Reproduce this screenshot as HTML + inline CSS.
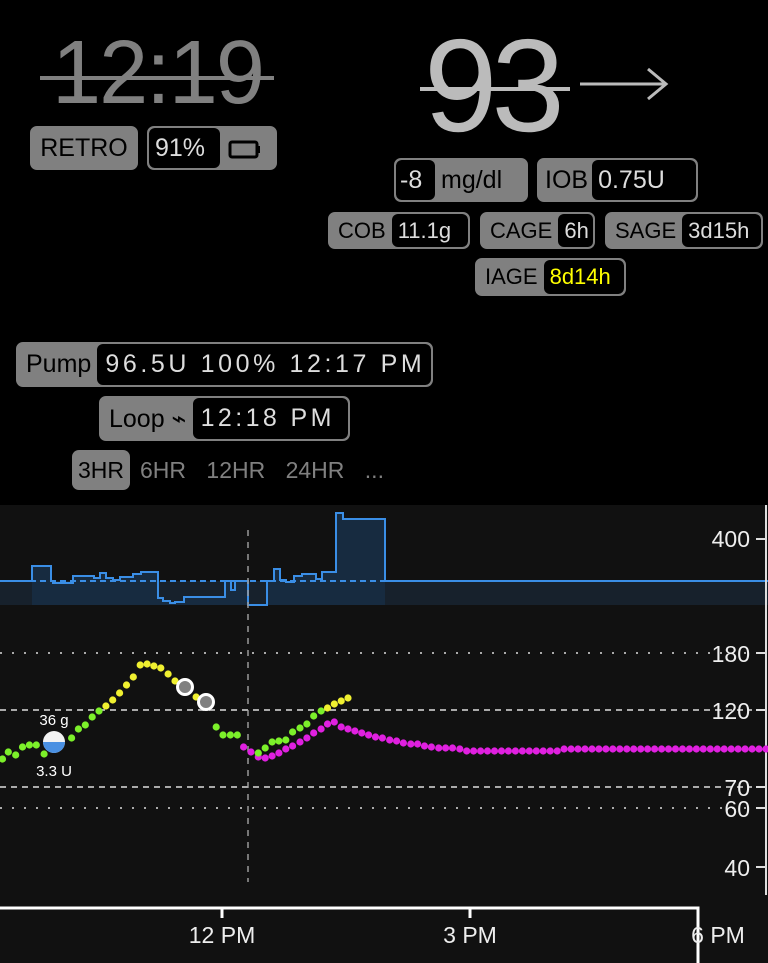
<!DOCTYPE html>
<html><head><meta charset="utf-8"><style>
*{margin:0;padding:0;box-sizing:border-box}
body{width:768px;height:963px;background:#000;position:relative;overflow:hidden;font-family:"Liberation Sans","DejaVu Sans",sans-serif}
.a{position:absolute}
.pill{position:absolute;background:#808080;border:2px solid #808080;border-radius:7px;color:#000;display:flex;align-items:center;white-space:nowrap;overflow:hidden}
.pill .l{padding:0 6px 0 8px}
.pill .v{background:#000;color:#ddd;height:100%;display:flex;align-items:center;padding:0 6px;border-radius:6px;flex:1}
</style></head><body>
<div class="a" style="left:52px;top:28px;font-size:90px;color:#808080;line-height:90px;transform:scaleX(0.98);transform-origin:0 0;letter-spacing:-2px">12:19</div>
<div class="a" style="left:40px;top:76px;width:234px;height:4px;background:#808080"></div>
<div class="a" style="left:424px;top:20px;font-size:132px;color:#bbb;letter-spacing:-6px;line-height:132px">93</div>
<div class="a" style="left:420px;top:87px;width:150px;height:4px;background:#bbb"></div>
<svg class="a" style="left:578px;top:66px" width="92" height="36"><path d="M2 18H86M70 3L88 18L70 33" stroke="#bbb" stroke-width="3" fill="none"/></svg>

<div class="pill" style="left:30px;top:126px;width:108px;height:44px;font-size:25px;justify-content:center">RETRO</div>
<div class="pill" style="left:147px;top:126px;width:130px;height:44px;font-size:25px"><div class="v" style="flex:0 0 71px">91%</div>
<svg width="50" height="30"><rect x="10" y="9" width="27" height="15" rx="2" stroke="#000" stroke-width="3" fill="none"/><rect x="37" y="13" width="3" height="7" fill="#000"/></svg></div>

<div class="pill" style="left:394px;top:158px;width:134px;height:44px;font-size:25px"><div class="v" style="flex:0 0 39px;padding:0 4px">-8</div><div class="l" style="padding-left:6px">mg/dl</div></div>
<div class="pill" style="left:537px;top:158px;width:161px;height:44px;font-size:25px"><div class="l" style="padding-left:6px;padding-right:4px">IOB</div><div class="v">0.75U</div></div>
<div class="pill" style="left:328px;top:212px;width:142px;height:37px;font-size:22px"><div class="l">COB</div><div class="v">11.1g</div></div>
<div class="pill" style="left:480px;top:212px;width:115px;height:37px;font-size:22px"><div class="l">CAGE</div><div class="v">6h</div></div>
<div class="pill" style="left:605px;top:212px;width:158px;height:37px;font-size:22px"><div class="l">SAGE</div><div class="v">3d15h</div></div>
<div class="pill" style="left:475px;top:258px;width:151px;height:38px;font-size:22px"><div class="l">IAGE</div><div class="v" style="color:#ff0">8d14h</div></div>

<div class="pill" style="left:16px;top:342px;width:417px;height:45px;font-size:25px"><div class="l">Pump</div><div class="v" style="letter-spacing:3.6px;padding-left:8px">96.5U 100% 12:17 PM</div></div>
<div class="pill" style="left:99px;top:396px;width:251px;height:45px;font-size:25px"><div class="l">Loop ⌁</div><div class="v" style="letter-spacing:3.4px;padding-left:8px">12:18 PM</div></div>
<div class="a" style="left:72px;top:450px;width:58px;height:40px;background:#808080;border-radius:7px;color:#000;font-size:23px;line-height:40px;text-align:center">3HR</div>
<div class="a" style="left:140px;top:450px;color:#808080;font-size:23px;line-height:40px;word-spacing:14px">6HR 12HR 24HR ...</div>

<div class="a" style="left:0;top:505px;width:768px;height:458px;background:#111"></div>
<svg class="a" style="left:0;top:0" width="768" height="963" font-family="Liberation Sans,sans-serif">
<rect x="0" y="581" width="768" height="24" fill="#17212c"/>
<path id="basf" fill="#172b40" stroke="none"/>
<path id="basl" fill="none" stroke="#3a8ee6" stroke-width="2"/>
<line x1="0" y1="581" x2="385" y2="581" stroke="#3a8ee6" stroke-width="2" stroke-dasharray="6,4"/>
<line x1="248" y1="530" x2="248" y2="882" stroke="#999" stroke-width="1.5" stroke-dasharray="6,6"/>
<line x1="0" y1="653" x2="752" y2="653" stroke="#aaa" stroke-width="2" stroke-dasharray="2,10"/>
<line x1="0" y1="710" x2="752" y2="710" stroke="#aaa" stroke-width="2" stroke-dasharray="6,5"/>
<line x1="0" y1="787" x2="752" y2="787" stroke="#aaa" stroke-width="2" stroke-dasharray="6,5"/>
<line x1="0" y1="808" x2="752" y2="808" stroke="#aaa" stroke-width="2" stroke-dasharray="2,10"/>
<line x1="766" y1="505" x2="766" y2="895" stroke="#ddd" stroke-width="2"/>
<g stroke="#ddd" stroke-width="2"><line x1="756" y1="539" x2="766" y2="539"/><line x1="756" y1="653" x2="766" y2="653"/><line x1="756" y1="710" x2="766" y2="710"/><line x1="756" y1="787" x2="766" y2="787"/><line x1="756" y1="808" x2="766" y2="808"/><line x1="756" y1="867" x2="766" y2="867"/></g>
<g fill="#eee" font-size="23" text-anchor="end"><text x="750" y="547">400</text><text x="750" y="662">180</text><text x="750" y="719">120</text><text x="750" y="796">70</text><text x="750" y="817">60</text><text x="750" y="876">40</text></g>
<path d="M0 908H698V963M222 908V918M470 908V918" stroke="#fff" stroke-width="3" fill="none"/>
<g fill="#eee" font-size="23" text-anchor="middle"><text x="222" y="943">12 PM</text><text x="470" y="943">3 PM</text><text x="718" y="943">6 PM</text></g>
<g id="dots"></g>
<circle cx="185" cy="687" r="7.5" fill="#808080" stroke="#fff" stroke-width="3"/>
<circle cx="206" cy="702" r="7.5" fill="#808080" stroke="#fff" stroke-width="3"/>
<clipPath id="cb"><rect x="42" y="742" width="24" height="14"/></clipPath>
<circle cx="54" cy="742" r="11" fill="#f2f2f2"/>
<circle cx="54" cy="742" r="11" fill="#4a90e2" clip-path="url(#cb)"/>
<text x="54" y="725" fill="#fff" font-size="15" text-anchor="middle">36 g</text>
<text x="54" y="776" fill="#fff" font-size="15" text-anchor="middle">3.3 U</text>
</svg>
<script>
var steps=[[0,581],[32,566],[51,581],[53,583],[73,576],[94,578],[100,573],[106,578],[113,580],[120,577],[133,574],[141,572],[158,598],[163,601],[170,603],[175,602],[184,597],[225,581],[231,590],[235,581],[248,605],[267,581],[274,569],[280,580],[286,582],[294,576],[302,574],[316,579],[322,572],[336,513],[343,519],[385,581],[768,581]];
var d="";for(var i=0;i<steps.length-1;i++){d+=(i?"L":"M")+steps[i][0]+" "+steps[i][1]+"L"+steps[i+1][0]+" "+steps[i][1];}
document.getElementById('basl').setAttribute('d',d);
var f="M32 605";for(var i=1;i<steps.length-2;i++){f+="L"+steps[i][0]+" "+steps[i][1]+"L"+steps[i+1][0]+" "+steps[i][1];}f+="L385 605Z";
document.getElementById('basf').setAttribute('d',f);
var G="#7cf02a",Y="#f0f030",M="#e020e0";
var pts=[[5,759,G],[17,752,G],[32,755,G],[46,747,G],[60,745,G],[74,745,G],[90,754,G],[146,738,G],[160,729,G],[174,725,G],[188,717,G],[202,711,G],[216,706,Y],[230,700,Y],[244,693,Y],[258,685,Y],[272,677,Y],[286,665,Y],[300,664,Y],[314,666,Y],[328,668,Y],[343,674,Y],[357,681,Y],[400,697,Y],[441,727,G],[455,735,G],[470,735,G],[484,735,G]];
var mg=[[497,747],[512,752],[527,757],[541,758],[555,756],[569,753],[583,749],[597,746],[612,742],[626,738],[640,733],[655,729],[668,724],[682,722],[696,727],[710,729],[724,731],[738,733],[752,735],[766,737],[780,738],[795,740],[809,741],[823,743],[838,744],[852,744],[866,746],[880,747],[895,748],[909,748],[923,748],[938,749]];
for(var x=952;x<1570;x+=14.2){mg.push([x,x<1150?751:749]);}
mg.forEach(function(p){pts.push([p[0],p[1],M]);});
[[527,753,G],[541,748,G],[555,742,G],[569,741,G],[583,740,G],[597,732,G],[612,728,G],[626,724,G],[640,716,G],[655,711,G],[668,708,Y],[682,704,Y],[696,701,Y],[710,698,Y]].forEach(function(p){pts.push(p);});
var s="";pts.forEach(function(p){s+='<circle cx="'+(p[0]/2.04).toFixed(1)+'" cy="'+p[1]+'" r="3.6" fill="'+p[2]+'"/>';});
document.getElementById('dots').innerHTML=s;
</script>
</body></html>
